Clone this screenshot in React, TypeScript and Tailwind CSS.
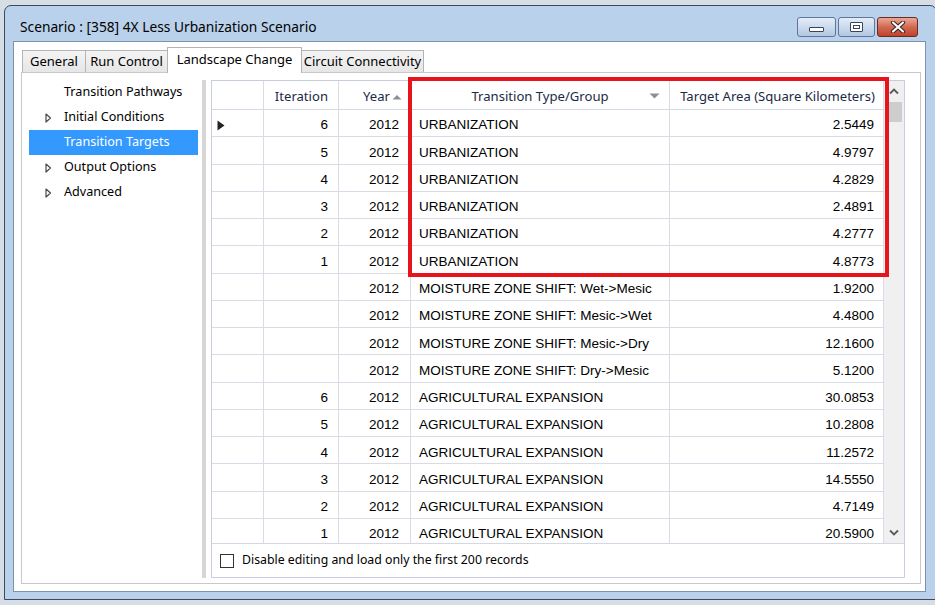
import React from "react";

const rows: [string, string, string, string][] = [
  ["6", "2012", "URBANIZATION", "2.5449"],
  ["5", "2012", "URBANIZATION", "4.9797"],
  ["4", "2012", "URBANIZATION", "4.2829"],
  ["3", "2012", "URBANIZATION", "2.4891"],
  ["2", "2012", "URBANIZATION", "4.2777"],
  ["1", "2012", "URBANIZATION", "4.8773"],
  ["", "2012", "MOISTURE ZONE SHIFT: Wet->Mesic", "1.9200"],
  ["", "2012", "MOISTURE ZONE SHIFT: Mesic->Wet", "4.4800"],
  ["", "2012", "MOISTURE ZONE SHIFT: Mesic->Dry", "12.1600"],
  ["", "2012", "MOISTURE ZONE SHIFT: Dry->Mesic", "5.1200"],
  ["6", "2012", "AGRICULTURAL EXPANSION", "30.0853"],
  ["5", "2012", "AGRICULTURAL EXPANSION", "10.2808"],
  ["4", "2012", "AGRICULTURAL EXPANSION", "11.2572"],
  ["3", "2012", "AGRICULTURAL EXPANSION", "14.5550"],
  ["2", "2012", "AGRICULTURAL EXPANSION", "4.7149"],
  ["1", "2012", "AGRICULTURAL EXPANSION", "20.5900"],
];

function TreeArrow() {
  return (
    <svg width="7" height="10" viewBox="0 0 7 10">
      <polygon points="1,1 5.5,5 1,9" fill="white" stroke="#4a4a4a" strokeWidth="1.2" strokeLinejoin="round" />
    </svg>
  );
}

function TreeItem({ label, arrow, selected }: { label: string; arrow?: boolean; selected?: boolean }) {
  return (
    <div
      className={
        "h-[25px] ml-[7px] mr-[4px] flex items-center " +
        (selected ? "bg-[#3399ff] text-white" : "text-black")
      }
    >
      <div className="w-[35px] flex justify-start pl-[16px]">{arrow ? <TreeArrow /> : null}</div>
      <span className="text-[12.6px] leading-none">{label}</span>
    </div>
  );
}

function MinBtn() {
  return (
    <div className="w-[39px] h-[20px] rounded-[3px] border border-[#5f7698] bg-gradient-to-b from-[#e4edf8] via-[#cbdaee] to-[#b2c7e2] flex items-end justify-center pb-[4px]">
      <div className="w-[15px] h-[5px] rounded-[1px] border border-[#39445a] bg-white" />
    </div>
  );
}

function MaxBtn() {
  return (
    <div className="w-[37px] h-[20px] rounded-[3px] border border-[#5f7698] bg-gradient-to-b from-[#e4edf8] via-[#cbdaee] to-[#b2c7e2] flex items-center justify-center">
      <div className="w-[13px] h-[10px] rounded-[1px] border border-[#39445a] bg-white flex items-center justify-center">
        <div className="w-[7px] h-[4px] border border-[#39445a]" />
      </div>
    </div>
  );
}

function CloseBtn() {
  return (
    <div className="w-[41px] h-[20px] rounded-[3px] border border-[#6c2b22] bg-gradient-to-b from-[#eaa896] via-[#d06a53] to-[#c1402a] flex items-center justify-center">
      <svg width="16" height="12" viewBox="0 0 16 12">
        <path d="M3 1.5 L13 10.5 M13 1.5 L3 10.5" stroke="#3b2420" strokeWidth="4.2" strokeLinecap="round" />
        <path d="M3 1.5 L13 10.5 M13 1.5 L3 10.5" stroke="white" strokeWidth="2.2" strokeLinecap="round" />
      </svg>
    </div>
  );
}

const cellFont = "font-['Liberation_Sans',Arial,sans-serif] text-[13.5px] leading-none text-black";
const cell = "border-r border-[#d8dce7] flex items-center pt-[4px]";
const hcell = "border-r border-[#d8dce7] flex items-center pt-[3px]";

export default function App() {
  return (
    <div className="relative w-[935px] h-[605px] overflow-hidden bg-[#d7dde5] pl-[4px] pt-[5px] font-['Noto_Sans',sans-serif]">
      <div className="w-[933px] h-[595px] rounded-t-[7px] border border-[#3a4a60] bg-[#b9d1ea] flex flex-col">
        {/* title bar */}
        <div className="h-[35px] shrink-0 flex items-start">
          <div className="pl-[15px] pt-[12px] text-[13.75px] leading-[18px] text-black">
            Scenario : [358] 4X Less Urbanization Scenario
          </div>
          <div className="ml-auto mr-[18px] mt-[11px] flex gap-[2px]">
            <MinBtn />
            <MaxBtn />
            <CloseBtn />
          </div>
        </div>
        {/* client */}
        <div className="flex-1 ml-[8px] mr-[10px] mb-[7px] border border-[#7d92ad] bg-white flex flex-col">
          {/* tabs */}
          <div className="h-[30px] shrink-0 flex items-end pl-[8px] text-[13px] text-black">
            <div className="w-[64px] h-[22px] border border-b-0 border-[#b4b4b4] bg-gradient-to-b from-[#f4f4f4] to-[#e6e6e6] flex items-center justify-center">
              General
            </div>
            <div className="-ml-px w-[83px] h-[22px] border border-b-0 border-[#b4b4b4] bg-gradient-to-b from-[#f4f4f4] to-[#e6e6e6] flex items-center justify-center">
              Run Control
            </div>
            <div className="-ml-px w-[135px] h-[26px] -mb-px relative z-10 border border-b-0 border-[#b4b4b4] bg-white flex items-center justify-center pb-[2px]">
              Landscape Change
            </div>
            <div className="-ml-px w-[123px] h-[22px] border border-b-0 border-[#b4b4b4] bg-gradient-to-b from-[#f4f4f4] to-[#e6e6e6] flex items-center justify-center">
              Circuit Connectivity
            </div>
          </div>
          {/* tab page */}
          <div className="flex-1 ml-[7px] mr-[4px] mb-[7px] border border-[#c9c9c9] bg-white flex">
            {/* tree */}
            <div className="w-[180px] pt-[7px]">
              <TreeItem label="Transition Pathways" />
              <TreeItem label="Initial Conditions" arrow />
              <TreeItem label="Transition Targets" selected />
              <TreeItem label="Output Options" arrow />
              <TreeItem label="Advanced" arrow />
            </div>
            {/* splitter + panel */}
            <div className="flex pt-[7px] pb-[5px]">
              <div className="w-[4px] bg-[#d6d6d6]" />
              <div className="w-[5px]" />
              <div className="w-[694px] border border-[#c8cddb] flex flex-col">
                <div className="h-[463px] shrink-0 flex border-b border-[#d3d8e4]">
                  <div className="w-[672px] overflow-hidden">
                    {/* header */}
                    <div className="h-[29px] flex border-b border-[#d3d8e4] text-[13.1px] leading-none text-[#1c2a44]">
                      <div className={"w-[52px] " + hcell} />
                      <div className={"w-[75px] justify-end pr-[10px] " + hcell}>Iteration</div>
                      <div className={"w-[72px] justify-end pr-[8px] " + hcell}>
                        <span>Year</span>
                        <svg width="10" height="6" viewBox="0 0 10 6" className="ml-[2px]">
                          <polygon points="0.5,5.5 5,1 9.5,5.5" fill="#8a8f99" />
                        </svg>
                      </div>
                      <div className={"w-[259px] relative " + hcell}>
                        <span className="w-full text-center">Transition Type/Group</span>
                        <svg width="11" height="6" viewBox="0 0 11 6" className="absolute right-[9px] top-[12px]">
                          <polygon points="0.5,0.5 10.5,0.5 5.5,5.5" fill="#8a8f99" />
                        </svg>
                      </div>
                      <div className={"w-[214px] justify-center pl-[2px] " + hcell}>
                        Target Area (Square Kilometers)
                      </div>
                    </div>
                    {/* rows */}
                    {rows.map((r, i) => (
                      <div key={i} className={"h-[27.27px] flex border-b border-[#d8dce7] " + cellFont}>
                        <div className={"w-[52px] pl-[5px] " + cell}>
                          {i === 0 ? (
                            <svg width="8" height="11" viewBox="0 0 8 11">
                              <polygon points="0.5,0.5 7.5,5.5 0.5,10.5" fill="#222" />
                            </svg>
                          ) : null}
                        </div>
                        <div className={"w-[75px] justify-end pr-[10px] " + cell}>{r[0]}</div>
                        <div className={"w-[72px] justify-end pr-[11px] " + cell}>{r[1]}</div>
                        <div className={"w-[259px] pl-[8px] whitespace-nowrap " + cell}>{r[2]}</div>
                        <div className={"w-[214px] justify-end pr-[9px] " + cell}>{r[3]}</div>
                      </div>
                    ))}
                  </div>
                  {/* scrollbar */}
                  <div className="w-[20px] bg-[#f0f0f0] flex flex-col items-center">
                    <div className="h-[21px] flex items-center justify-center">
                      <svg width="10" height="7" viewBox="0 0 10 7">
                        <polyline points="1,5.5 5,1.5 9,5.5" fill="none" stroke="#5a5a5a" strokeWidth="1.8" />
                      </svg>
                    </div>
                    <div className="w-[16px] h-[20px] bg-[#cdcdcd]" />
                    <div className="flex-1" />
                    <div className="h-[22px] flex items-center justify-center">
                      <svg width="10" height="7" viewBox="0 0 10 7">
                        <polyline points="1,1.5 5,5.5 9,1.5" fill="none" stroke="#5a5a5a" strokeWidth="1.8" />
                      </svg>
                    </div>
                  </div>
                </div>
                {/* checkbox row */}
                <div className="flex-1 flex items-center pl-[8px]">
                  <div className="w-[14px] h-[14px] border border-[#333] bg-white" />
                  <span className="ml-[8px] text-[12.3px] leading-none text-black">
                    Disable editing and load only the first 200 records
                  </span>
                </div>
              </div>
            </div>
          </div>
        </div>
      </div>
      {/* red highlight */}
      <div className="absolute left-[408px] top-[77px] w-[481px] h-[200px] border-4 border-[#e8141c] pointer-events-none" />
    </div>
  );
}
